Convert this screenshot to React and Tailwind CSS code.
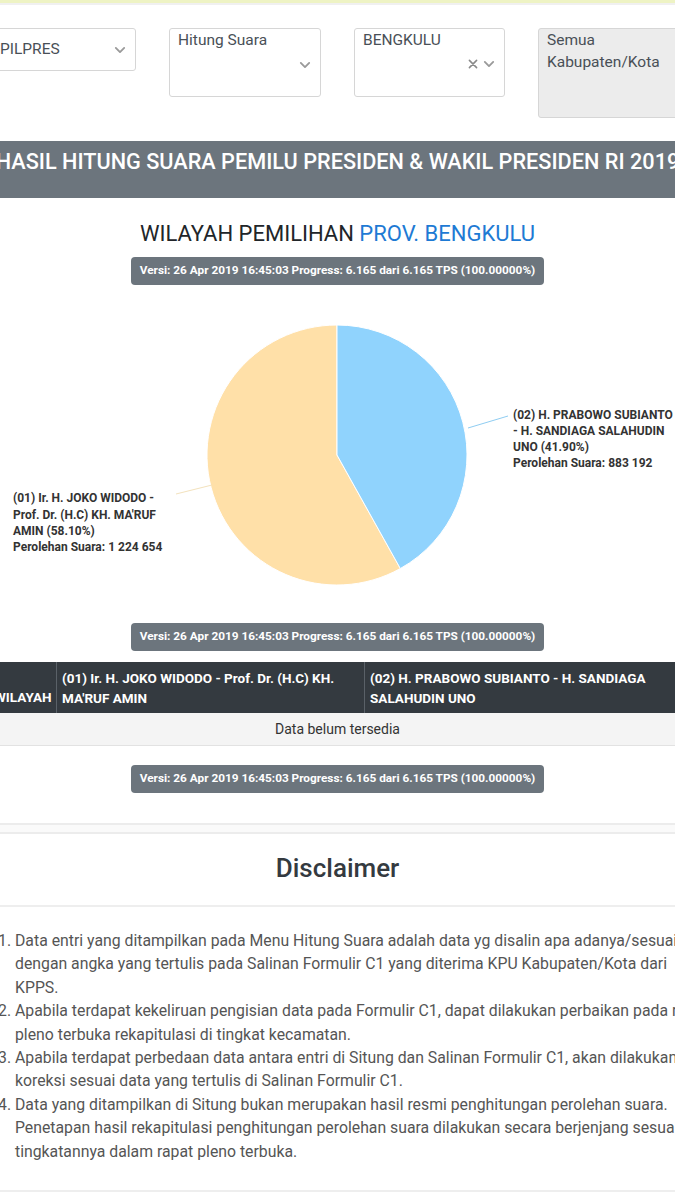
import React from 'react';

const Chevron = ({ className = '' }) => (
    <svg className={className} width="14" height="14" viewBox="0 0 20 20" fill="none">
        <path d="M4 7l6 6 6-6" stroke="#9a9a9a" strokeWidth="2.6" strokeLinecap="round" strokeLinejoin="round" />
    </svg>
);

const Cross = () => (
    <svg width="12" height="12" viewBox="0 0 20 20" fill="none">
        <path d="M4 4l12 12M16 4L4 16" stroke="#8a8a8a" strokeWidth="2.6" strokeLinecap="round" />
    </svg>
);

const Badge = () => (
    <div className="flex justify-center">
        <div className="w-[413px] h-[28px] rounded-[4px] bg-[#6c757d] flex items-center justify-center text-white text-[11.8px] font-bold whitespace-nowrap">
            Versi: 26 Apr 2019 16:45:03 Progress: 6.165 dari 6.165 TPS (100.00000%)
        </div>
    </div>
);

const disclaimers = [
    'Data entri yang ditampilkan pada Menu Hitung Suara adalah data yg disalin apa adanya/sesuai dengan angka yang tertulis pada Salinan Formulir C1 yang diterima KPU Kabupaten/Kota dari KPPS.',
    'Apabila terdapat kekeliruan pengisian data pada Formulir C1, dapat dilakukan perbaikan pada rapat pleno terbuka rekapitulasi di tingkat kecamatan.',
    'Apabila terdapat perbedaan data antara entri di Situng dan Salinan Formulir C1, akan dilakukan koreksi sesuai data yang tertulis di Salinan Formulir C1.',
    'Data yang ditampilkan di Situng bukan merupakan hasil resmi penghitungan perolehan suara. Penetapan hasil rekapitulasi penghitungan perolehan suara dilakukan secara berjenjang sesuai tingkatannya dalam rapat pleno terbuka.',
];

export default function App() {
    // pie: center 337,160 r 130, 41.90% blue from 12 o'clock
    const a = 0.419 * Math.PI * 2;
    const ex = 337 + 130 * Math.sin(a);
    const ey = 160 - 130 * Math.cos(a);

    return (
        <div className="w-[675px] h-[1200px] overflow-hidden bg-white font-['Roboto',sans-serif] text-[#333]">
            {/* top strip */}
            <div className="h-[3px] bg-[#eef3c4]" />
            <div className="h-[2px] bg-[#f0f0f0]" />

            {/* filters */}
            <div className="flex items-start gap-[33px] ml-[-40px] mt-[23px] text-[15.5px] text-[#495057] whitespace-nowrap">
                <div className="w-[176px] h-[43px] shrink-0 border border-[#d6d6d6] rounded-[3px] flex items-center justify-between pl-[39px] pr-[8px]">
                    <span>PILPRES</span>
                    <Chevron />
                </div>
                <div className="w-[152px] h-[69px] shrink-0 border border-[#d6d6d6] rounded-[3px] relative pl-[8px]">
                    <span>Hitung Suara</span>
                    <Chevron className="absolute right-[8px] top-[29px]" />
                </div>
                <div className="w-[151px] h-[69px] shrink-0 border border-[#d6d6d6] rounded-[3px] relative pl-[8px]">
                    <span>BENGKULU</span>
                    <div className="absolute right-[8px] top-[28px] flex items-center gap-[3px]">
                        <Cross />
                        <Chevron />
                    </div>
                </div>
                <div className="w-[152px] h-[90px] shrink-0 border border-[#d6d6d6] rounded-[3px] bg-[#ececec] pl-[8px] leading-[22px] whitespace-normal">
                    Semua<br />Kabupaten/Kota
                </div>
            </div>

            {/* banner */}
            <div className="mt-[23px] h-[57px] bg-[#6c757d] flex justify-center pt-[7px]">
                <div className="text-white text-[21.7px] font-medium whitespace-nowrap leading-[28px] shrink-0">
                    HASIL HITUNG SUARA PEMILU PRESIDEN &amp; WAKIL PRESIDEN RI 2019
                </div>
            </div>

            {/* region title */}
            <div className="mt-[22px] text-center text-[22px] leading-[28px] text-[#212529]">
                WILAYAH PEMILIHAN <span className="text-[#1e7ad4]">PROV. BENGKULU</span>
            </div>
            <div className="mt-[9px]">
                <Badge />
            </div>

            {/* pie chart */}
            <div className="mt-[10px] h-[328px]">
                <svg width="675" height="328" viewBox="0 0 675 328">
                    <path d={`M337,160 L${ex},${ey} A130,130 0 1 1 337,30 Z`} fill="#ffe0a8" stroke="#fff" strokeWidth="1" />
                    <path d={`M337,160 L337,30 A130,130 0 0 1 ${ex},${ey} Z`} fill="#90d3fd" stroke="#fff" strokeWidth="1" />
                    <line x1="468" y1="133" x2="508" y2="121" stroke="#8fcdf2" strokeWidth="1" />
                    <line x1="176" y1="199" x2="212" y2="190" stroke="#f3e2bd" strokeWidth="1" />
                    <text fontFamily="Roboto, sans-serif" fontSize="12" fontWeight="700" fill="#333">
                        <tspan x="513" y="124">(02) H. PRABOWO SUBIANTO</tspan>
                        <tspan x="513" y="140">- H. SANDIAGA SALAHUDIN</tspan>
                        <tspan x="513" y="156">UNO (41.90%)</tspan>
                        <tspan x="513" y="172">Perolehan Suara: 883 192</tspan>
                    </text>
                    <text fontFamily="Roboto, sans-serif" fontSize="12" fontWeight="700" fill="#333">
                        <tspan x="13" y="207">(01) Ir. H. JOKO WIDODO -</tspan>
                        <tspan x="13" y="224">Prof. Dr. (H.C) KH. MA'RUF</tspan>
                        <tspan x="13" y="240">AMIN (58.10%)</tspan>
                        <tspan x="13" y="256">Perolehan Suara: 1 224 654</tspan>
                    </text>
                </svg>
            </div>

            <Badge />

            {/* table */}
            <div className="mt-[11px] ml-[-40px] w-[760px]">
                <div className="flex bg-[#343a40] text-white text-[13.5px] font-bold leading-[20px] h-[51px]">
                    <div className="w-[97px] shrink-0 flex items-end pb-[6px] pl-[34px] border-r border-[#5a6168]">WILAYAH</div>
                    <div className="w-[308px] shrink-0 pl-[5px] pt-[6px] border-r border-[#5a6168]">
                        (01) Ir. H. JOKO WIDODO - Prof. Dr. (H.C) KH.<br />MA'RUF AMIN
                    </div>
                    <div className="flex-1 pl-[5px] pt-[6px]">
                        (02) H. PRABOWO SUBIANTO - H. SANDIAGA<br />SALAHUDIN UNO
                    </div>
                </div>
            </div>
            <div className="h-[33px] bg-[#f4f4f4] border-b border-[#e2e2e2] flex items-center justify-center text-[14px] text-[#333]">
                Data belum tersedia
            </div>

            <div className="mt-[19px]">
                <Badge />
            </div>

            {/* card separation */}
            <div className="mt-[30px] h-[11px] border-t-2 border-b-2 border-[#ececec] bg-[#fafafa]" />

            {/* disclaimer */}
            <div className="h-[73px] flex items-center justify-center text-[26px] font-medium text-[#343a40] border-b-2 border-[#eeeeee] pb-[2px]">
                Disclaimer
            </div>
            <ol className="ml-[-2px] w-[714px] pt-[22px] text-[15.8px] leading-[23.4px] text-[#555] list-none">
                {disclaimers.map((d, i) => (
                    <li key={i} className="flex">
                        <span className="w-[17px] shrink-0">{i + 1}.</span>
                        <span>{d}</span>
                    </li>
                ))}
            </ol>
            <div className="mt-[27px] h-[2px] bg-[#eeeeee]" />
        </div>
    );
}
